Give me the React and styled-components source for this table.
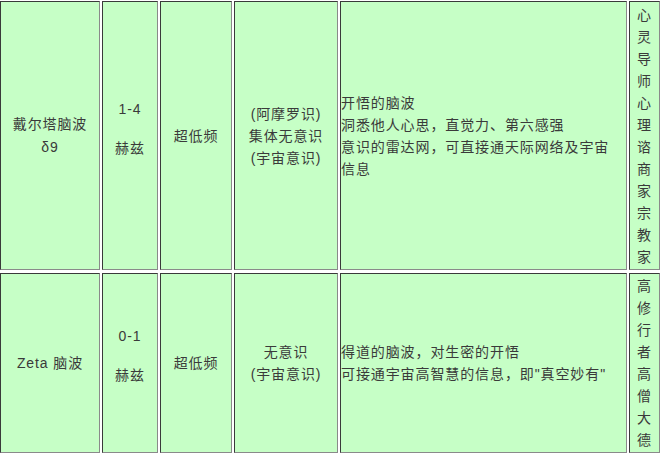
import styled, { createGlobalStyle } from "styled-components";

const GlobalStyle = createGlobalStyle`
  html, body {
    margin: 0;
    padding: 0;
    background: #ffffff;
  }
`;

const Table = styled.div`
  display: grid;
  grid-template-columns: 100px 56px 72px 104px 287px 31px;
  grid-template-rows: 269px 180px;
  gap: 3px 2px;
  padding-top: 1px;
  font-family: "Liberation Sans", "Noto Sans CJK SC", sans-serif;
  font-size: 14px;
  letter-spacing: 0.9px;
  color: #3a3a3a;
`;

const Cell = styled.div`
  --lh: ${(p) => p.$lh || 22}px;
  box-sizing: border-box;
  overflow: hidden;
  background: #c6ffc6;
  border-style: solid;
  border-width: 1px;
  border-color: #3a3a3a #8a8a8a #8a8a8a #3a3a3a;
  display: flex;
  flex-direction: column;
  justify-content: center;
  align-items: ${(p) => (p.$left ? "flex-start" : "center")};
  text-align: ${(p) => (p.$left ? "left" : "center")};
  line-height: var(--lh);
  padding-bottom: ${(p) => p.$pb || 0}px;
`;

const Line = styled.div`
  white-space: nowrap;
  height: var(--lh);
  flex: none;
`;

const Gap = styled.div`
  height: ${(p) => p.$h}px;
  flex: none;
`;

const VerticalText = ({ text }) => (
  <Cell $lh={22}>
    {text.split("").map((ch, i) => (
      <Line key={i}>{ch}</Line>
    ))}
  </Cell>
);

const rows = [
  {
    name: ["戴尔塔脑波", "δ9"],
    freq: "1-4",
    band: "超低频",
    mind: ["(阿摩罗识)", "集体无意识", "(宇宙意识)"],
    desc: [
      "开悟的脑波",
      "洞悉他人心思，直觉力、第六感强",
      "意识的雷达网，可直接通天际网络及宇宙",
      "信息",
    ],
    who: "心灵导师心理谘商家宗教家",
  },
  {
    name: ["Zeta 脑波"],
    freq: "0-1",
    band: "超低频",
    mind: ["无意识", "(宇宙意识)"],
    desc: ["得道的脑波，对生密的开悟", "可接通宇宙高智慧的信息，即\"真空妙有\""],
    who: "高修行者高僧大德",
  },
];

export default function App() {
  return (
    <>
      <GlobalStyle />
      <Table>
        {rows.map((r, i) => [
          <Cell key={`n${i}`} $lh={23}>
            {r.name.map((t) => (
              <Line key={t}>{t}</Line>
            ))}
          </Cell>,
          <Cell key={`f${i}`} $pb={15}>
            <Line>{r.freq}</Line>
            <Gap $h={17} />
            <Line>赫兹</Line>
          </Cell>,
          <Cell key={`b${i}`}>
            <Line>{r.band}</Line>
          </Cell>,
          <Cell key={`m${i}`}>
            {r.mind.map((t) => (
              <Line key={t}>{t}</Line>
            ))}
          </Cell>,
          <Cell key={`d${i}`} $left>
            {r.desc.map((t) => (
              <Line key={t}>{t}</Line>
            ))}
          </Cell>,
          <VerticalText key={`w${i}`} text={r.who} />,
        ])}
      </Table>
    </>
  );
}
